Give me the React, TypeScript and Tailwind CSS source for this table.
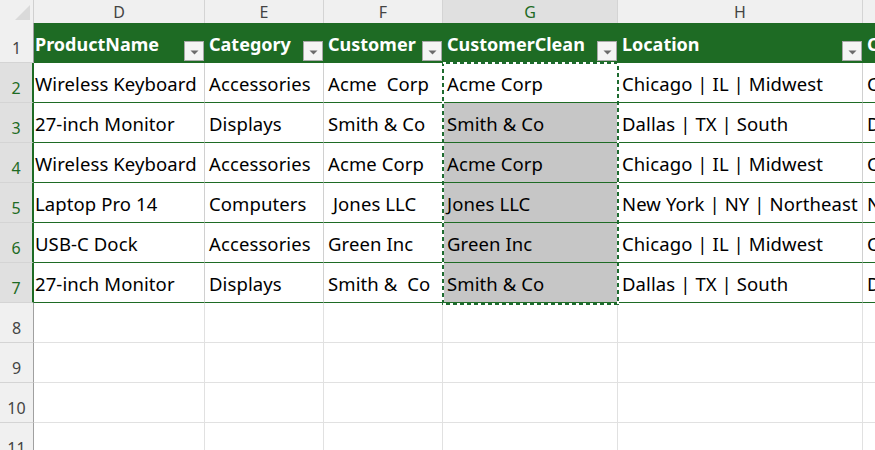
import React from "react";

const COLS = [
  { key: "D", w: 171 },
  { key: "E", w: 119 },
  { key: "F", w: 119 },
  { key: "G", w: 175 },
  { key: "H", w: 245 },
  { key: "I", w: 140 },
];

const HEADERS = ["ProductName", "Category", "Customer", "CustomerClean", "Location", "City"];

const DATA: string[][] = [
  ["Wireless Keyboard", "Accessories", "Acme  Corp", "Acme Corp", "Chicago | IL | Midwest", "Chicago"],
  ["27-inch Monitor", "Displays", "Smith & Co", "Smith & Co", "Dallas | TX | South", "Dallas"],
  ["Wireless Keyboard", "Accessories", "Acme Corp", "Acme Corp", "Chicago | IL | Midwest", "Chicago"],
  ["Laptop Pro 14", "Computers", " Jones LLC", "Jones LLC", "New York | NY | Northeast", "New York"],
  ["USB-C Dock", "Accessories", "Green Inc", "Green Inc", "Chicago | IL | Midwest", "Chicago"],
  ["27-inch Monitor", "Displays", "Smith &  Co", "Smith & Co", "Dallas | TX | South", "Dallas"],
];

const FONT = { fontFamily: '"Noto Sans", "Open Sans", sans-serif' };

function FilterButton() {
  return (
    <div className="absolute right-[1px] bottom-[2px] w-[20px] h-[20px] bg-[#f4f4f4] border border-[#a8a8a8] flex items-center justify-center">
      <svg width="9" height="5" viewBox="0 0 9 5" className="mt-[3px]">
        <polygon points="0.5,0.5 8.5,0.5 4.5,4.5" fill="#6b6b6b" />
      </svg>
    </div>
  );
}

function RowHeader({ n, selected }: { n: number; selected?: boolean }) {
  return (
    <div
      className={`w-[34px] h-[40px] shrink-0 flex items-end justify-center text-[16px] leading-none border-b border-[#d4d4d4] ${
        selected
          ? "bg-[#e0e0e0] text-[#1e6b24] border-r-2 border-r-[#1e6b24]"
          : "bg-[#f0f0f0] text-[#444444] border-r border-r-[#a0a0a0]"
      }`}
    >
      <span className="pb-[6px]">{n}</span>
    </div>
  );
}

export default function App() {
  return (
    <div
      className="relative w-[875px] h-[450px] overflow-hidden bg-white text-black"
      style={FONT}
    >
      {/* Column letters */}
      <div className="flex h-[23px]">
        <div className="relative w-[34px] h-[23px] shrink-0 bg-[#f0f0f0] border-r border-[#d0d0d0]">
          <svg className="absolute left-[15px] top-[5px]" width="15" height="15" viewBox="0 0 15 15">
            <polygon points="15,0 15,15 0,15" fill="#dadada" />
          </svg>
        </div>
        {COLS.map((c) => (
          <div
            key={c.key}
            style={{ width: c.w }}
            className={`shrink-0 h-[23px] flex items-center justify-center text-[16px] leading-none border-r border-[#d4d4d4] ${
              c.key === "G" ? "bg-[#e0e0e0] text-[#1e6b24]" : "bg-[#f0f0f0] text-[#444444]"
            }`}
          >
            <span className="pt-[1px]">{c.key}</span>
          </div>
        ))}
      </div>

      {/* Row 1 : table header */}
      <div className="flex h-[40px]">
        <div className="w-[34px] h-[40px] shrink-0 flex items-end justify-center text-[16px] leading-none bg-[#f0f0f0] text-[#444444] border-r border-[#a0a0a0] border-b border-b-[#d4d4d4]">
          <span className="pb-[6px]">1</span>
        </div>
        {COLS.map((c, i) => (
          <div
            key={c.key}
            style={{ width: c.w }}
            className={`relative shrink-0 h-[40px] bg-[#1e6b24] text-white font-bold text-[18px] flex items-center whitespace-nowrap overflow-hidden ${
              i === 0 ? "pl-[1px]" : "pl-[4px]"
            }`}
          >
            <span className="pt-[2px]">{HEADERS[i]}</span>
            {i < 5 && <FilterButton />}
          </div>
        ))}
      </div>

      {/* Data rows */}
      {DATA.map((row, r) => (
        <div key={r} className="flex h-[40px]">
          <RowHeader n={r + 2} selected />
          {COLS.map((c, i) => (
            <div
              key={c.key}
              style={{ width: c.w }}
              className={`shrink-0 h-[40px] text-[18.5px] tracking-[0.1px] flex items-center whitespace-pre overflow-hidden border-b border-b-[#1e6b24] border-r border-r-[#d0d0d0] ${
                i === 0 ? "pl-[1px]" : "pl-[4px]"
              } ${c.key === "G" && r > 0 ? "bg-[#c6c6c6]" : "bg-white"}`}
            >
              <span className="pt-[2px]">{row[i]}</span>
            </div>
          ))}
        </div>
      ))}

      {/* Empty rows */}
      {[8, 9, 10, 11].map((n) => (
        <div key={n} className="flex h-[40px]">
          <RowHeader n={n} />
          {COLS.map((c) => (
            <div
              key={c.key}
              style={{ width: c.w }}
              className="shrink-0 h-[40px] border-b border-r border-[#e1e1e1]"
            />
          ))}
        </div>
      ))}

      {/* Copy marquee around G2:G7 */}
      <svg className="absolute left-[442px] top-[62px]" width="177" height="243" viewBox="0 0 177 243">
        <rect x="1" y="1" width="175" height="241" fill="none" stroke="#1e6b30" strokeWidth="2" />
        <rect x="1" y="1" width="175" height="241" fill="none" stroke="#ffffff" strokeWidth="2" strokeDasharray="3 4" />
      </svg>
    </div>
  );
}
